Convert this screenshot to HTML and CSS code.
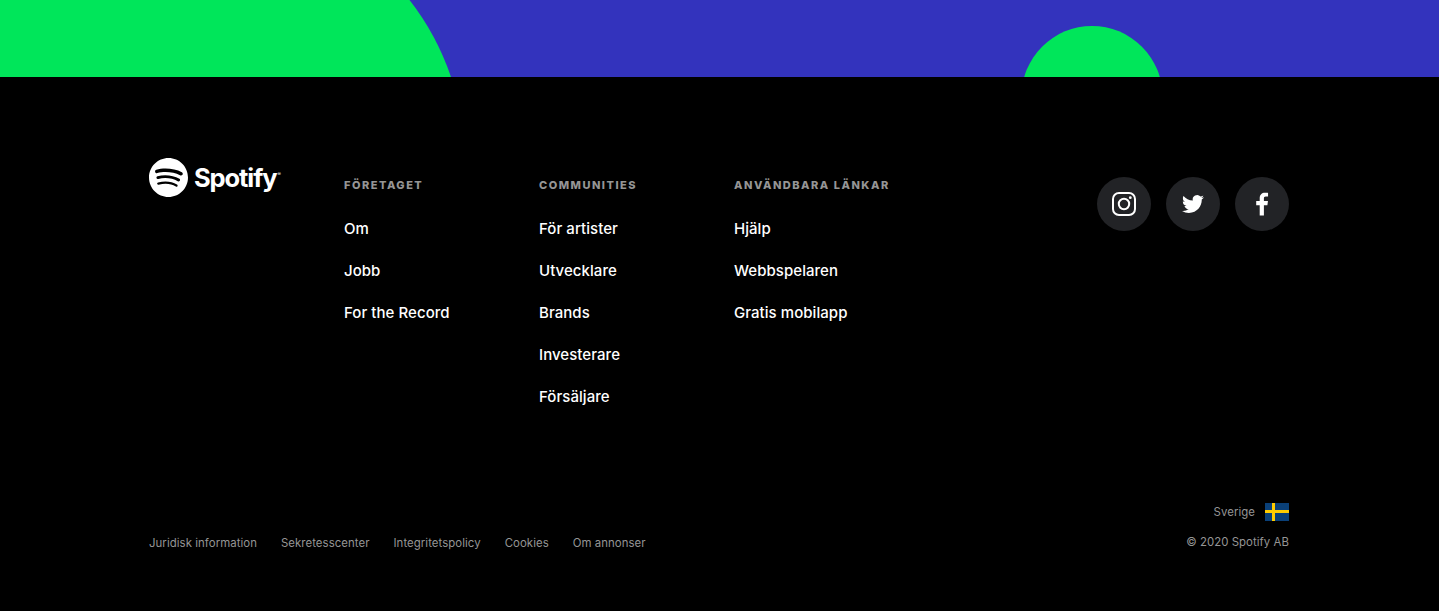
FILE: index.html
```html
<!DOCTYPE html>
<html lang="sv">

<head>
    <meta charset="UTF-8">
    <meta name="viewport" content="width=device-width, initial-scale=1.0">
    <title>Spotify</title>
    <link rel="stylesheet" href="styles.css">
</head>

<body>
    <div class="banner">
        <svg class="banner-art" viewBox="0 0 1439 77" width="1439" height="77" aria-hidden="true">
            <path class="shape-green" d="M0 0H409.500A262 262 0 0 1 451 77H0Z" />
            <circle class="shape-green" cx="1092" cy="96.600" r="70.600" />
        </svg>
    </div>

    <footer class="footer">
        <div class="footer-top">
            <a class="logo" href="#">
                <svg class="logo-mark" viewBox="0 0 24 24" aria-hidden="true">
                    <path d="M12 0C5.4 0 0 5.4 0 12s5.4 12 12 12 12-5.4 12-12S18.660 0 12 0zm5.521 17.340c-.24.359-.66.48-1.021.24-2.820-1.740-6.360-2.101-10.561-1.141-.418.122-.779-.179-.899-.539-.12-.421.18-.78.54-.9 4.560-1.021 8.520-.6 11.640 1.320.42.18.479.659.301 1.020zm1.440-3.300c-.301.42-.841.6-1.262.3-3.239-1.980-8.159-2.580-11.939-1.380-.479.12-1.020-.12-1.140-.6-.12-.48.12-1.021.6-1.141C9.600 9.900 15 10.561 18.720 12.840c.361.181.54.78.241 1.200zm.12-3.360C15.240 8.400 8.820 8.160 5.160 9.301c-.6.179-1.200-.181-1.380-.721-.18-.601.18-1.200.72-1.381 4.260-1.260 11.280-1.020 15.721 1.621.539.3.719 1.020.419 1.560-.299.421-1.020.599-1.559.3z" />
                </svg>
                <span class="logo-word">Spotify</span><span class="logo-tm">®</span>
            </a>

            <nav class="link-columns">
                <div class="link-column">
                    <h3 class="column-title">Företaget</h3>
                    <a href="#">Om</a>
                    <a href="#">Jobb</a>
                    <a href="#">For the Record</a>
                </div>
                <div class="link-column">
                    <h3 class="column-title">Communities</h3>
                    <a href="#">För artister</a>
                    <a href="#">Utvecklare</a>
                    <a href="#">Brands</a>
                    <a href="#">Investerare</a>
                    <a href="#">Försäljare</a>
                </div>
                <div class="link-column">
                    <h3 class="column-title">Användbara länkar</h3>
                    <a href="#">Hjälp</a>
                    <a href="#">Webbspelaren</a>
                    <a href="#">Gratis mobilapp</a>
                </div>
            </nav>

            <div class="social">
                <a class="social-btn" href="#" aria-label="Instagram">
                    <svg viewBox="0 0 24 24" class="icon-instagram" aria-hidden="true">
                        <rect x="1" y="1" width="22" height="22" rx="6" />
                        <circle cx="12" cy="12" r="5.200" />
                        <circle class="dot" cx="18.300" cy="5.700" r="1.400" />
                    </svg>
                </a>
                <a class="social-btn" href="#" aria-label="Twitter">
                    <svg viewBox="0 0 24 24" class="icon-solid icon-twitter" aria-hidden="true">
                        <path d="M23.953 4.570a10 10 0 01-2.825.775 4.958 4.958 0 002.163-2.723c-.951.555-2.005.959-3.127 1.184a4.920 4.920 0 00-8.384 4.482C7.690 8.095 4.067 6.130 1.640 3.162a4.822 4.822 0 00-.666 2.475c0 1.710.87 3.213 2.188 4.096a4.904 4.904 0 01-2.228-.616v.06a4.923 4.923 0 003.946 4.827 4.996 4.996 0 01-2.212.085 4.936 4.936 0 004.604 3.417 9.867 9.867 0 01-6.102 2.105c-.39 0-.779-.023-1.170-.067a13.995 13.995 0 007.557 2.209c9.053 0 13.998-7.496 13.998-13.985 0-.21 0-.42-.015-.63A9.935 9.935 0 0024 4.590z" />
                    </svg>
                </a>
                <a class="social-btn" href="#" aria-label="Facebook">
                    <svg viewBox="0 0 24 24" class="icon-solid" aria-hidden="true">
                        <path d="M13.900 23.500V13.200h3.500l.55-4.100H13.900V6.600c0-1.200.35-2 2-2h2.150V.9c-.4-.05-1.650-.15-3.100-.15-3.100 0-5.250 1.900-5.250 5.350v3H6.200v4.100h3.500v10.300z" />
                    </svg>
                </a>
            </div>
        </div>

        <div class="footer-bottom">
            <div class="legal">
                <a href="#">Juridisk information</a>
                <a href="#">Sekretesscenter</a>
                <a href="#">Integritetspolicy</a>
                <a href="#">Cookies</a>
                <a href="#">Om annonser</a>
            </div>
            <div class="locale">
                <div class="country">
                    <span>Sverige</span>
                    <span class="flag"></span>
                </div>
                <div class="copyright">© 2020 Spotify AB</div>
            </div>
        </div>
    </footer>
</body>

</html>
```

FILE: styles.css
```css
body {
    font-family: Inter, Arial, sans-serif;
    margin: 0;
    background-color: #000000;
    color: #ffffff;
}

a {
    color: inherit;
    text-decoration: none;
}

.banner {
    height: 77px;
    background-color: #3333bd;
    overflow: hidden;
}

.banner-art {
    display: block;
}

.shape-green {
    fill: #00e65a;
}

.footer {
    height: 534px;
    padding: 81px 150px 0 149px;
    box-sizing: border-box;
    display: flex;
    flex-direction: column;
}

.footer-top {
    display: flex;
    align-items: flex-start;
    height: 345px;
}

.logo {
    width: 195px;
    flex-shrink: 0;
    display: flex;
    align-items: center;
    height: 39px;
}

.logo-mark {
    width: 39px;
    height: 39px;
    fill: #ffffff;
    flex-shrink: 0;
}

.logo-word {
    font-size: 25.500px;
    font-weight: 700;
    margin-left: 6px;
    letter-spacing: -1.100px;
}

.logo-tm {
    font-size: 5px;
    align-self: flex-start;
    margin-top: 13px;
    margin-left: 1px;
}

.link-columns {
    display: flex;
}

.link-column {
    width: 195px;
    display: flex;
    flex-direction: column;
    align-items: flex-start;
    padding-top: 19px;
}

.column-title {
    margin: 0 0 24px;
    font-size: 11px;
    line-height: 16px;
    font-weight: 800;
    letter-spacing: 1.500px;
    text-transform: uppercase;
    color: #959595;
}

.link-column a {
    font-size: 15px;
    line-height: 24px;
    margin-bottom: 18px;
    font-weight: 500;
    letter-spacing: 0.05px;
}

.social {
    margin-left: auto;
    margin-top: 19px;
    display: flex;
    gap: 15px;
}

.social-btn {
    width: 54px;
    height: 54px;
    border-radius: 50%;
    background-color: #222326;
    display: flex;
    align-items: center;
    justify-content: center;
}

.social-btn svg {
    width: 24px;
    height: 24px;
}

.social-btn .icon-twitter {
    width: 22px;
    height: 22px;
}

.icon-solid {
    fill: #ffffff;
}

.icon-instagram {
    fill: none;
    stroke: #ffffff;
    stroke-width: 2;
}

.icon-instagram .dot {
    fill: #ffffff;
    stroke: none;
}

.footer-bottom {
    display: flex;
    justify-content: space-between;
    align-items: flex-end;
}

.legal {
    display: flex;
    gap: 24px;
    font-size: 11.400px;
    line-height: 16px;
    letter-spacing: 0.06px;
    color: #959595;
    margin-bottom: -1px;
}

.locale {
    display: flex;
    flex-direction: column;
    align-items: flex-end;
    font-size: 11.400px;
    line-height: 16px;
    letter-spacing: 0.06px;
    color: #959595;
}

.country {
    display: flex;
    align-items: center;
    gap: 10px;
    margin-bottom: 13px;
}

.flag {
    width: 24px;
    height: 18px;
    background-color: #0a4078;
    background-image:
        linear-gradient(#fecc00, #fecc00),
        linear-gradient(#fecc00, #fecc00);
    background-size: 100% 3px, 3px 100%;
    background-position: 0 7px, 7px 0;
    background-repeat: no-repeat;
}
```
